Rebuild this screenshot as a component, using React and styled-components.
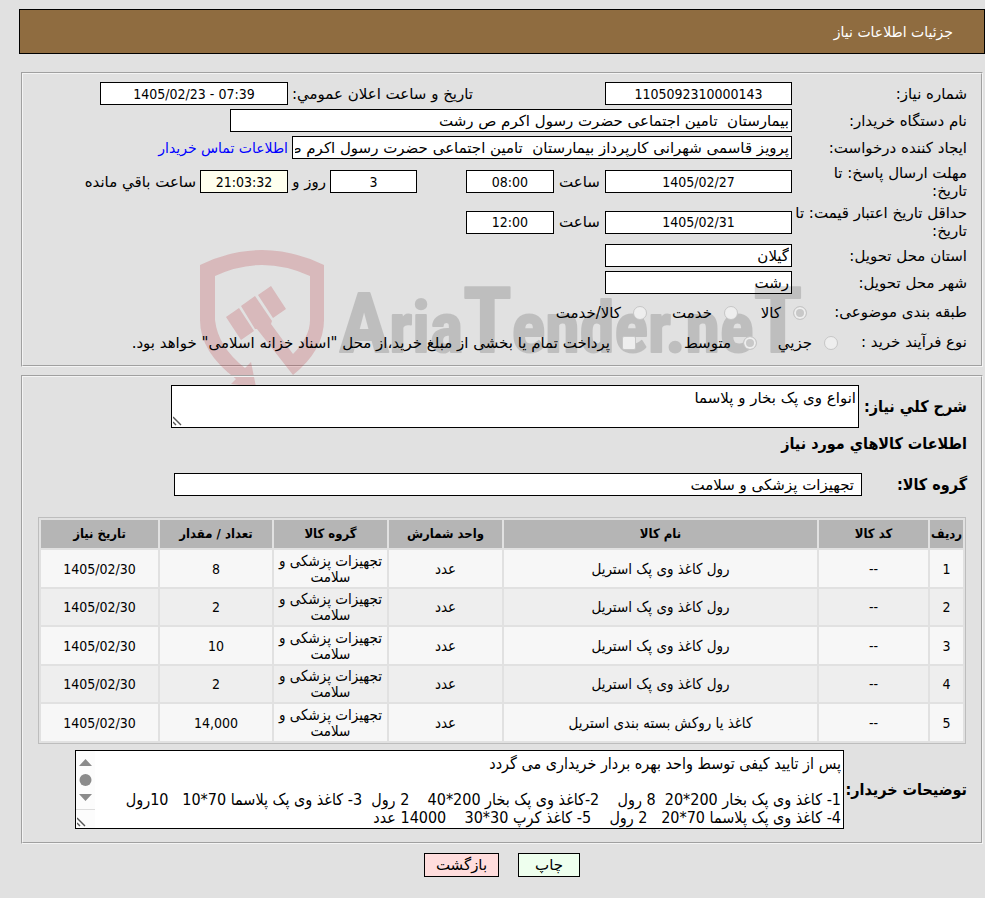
import React from "react";
import styled, { createGlobalStyle } from "styled-components";

const NARROW = '"DejaVu Sans Condensed", "DejaVu Sans", "Noto Sans", sans-serif';

const GlobalStyle = createGlobalStyle`
  * { box-sizing: border-box; }
  body {
    margin: 0;
    background: #e1e1e1;
    color: #000;
    font-family: "DejaVu Sans", "Noto Sans", sans-serif;
    font-size: 15px;
    line-height: 18px;
  }
  input, textarea, button { font: inherit; color: inherit; }
`;

const Page = styled.div`
  direction: rtl;
  padding: 9px 0 22px 19px;
`;

const Banner = styled.header`
  display: flex;
  align-items: center;
  height: 45px;
  padding: 0 31px;
  border: 1px solid #000;
  background: #8f6c40;
  color: #fff;
`;

const Title = styled.h1`
  margin: 0;
  font-size: 14px;
  font-weight: normal;
`;

const Panel = styled.section`
  position: relative;
  margin: ${(p) => p.$top}px 2px 0;
  padding: ${(p) => p.$pad};
  border: 2px groove #f4f4f4;
`;

const Row = styled.div`
  display: flex;
  align-items: center;
  min-height: ${(p) => p.$height || 27}px;
`;

const FieldLabel = styled.label`
  flex: none;
  width: ${(p) => p.$width || 175}px;
  white-space: nowrap;
`;

const RowTitle = styled.span`
  flex: none;
  width: ${(p) => p.$width}px;
  white-space: nowrap;
`;

const Inline = styled.label`
  display: flex;
  flex: none;
  justify-content: ${(p) => p.$justify || "center"};
  width: ${(p) => (p.$width ? p.$width + "px" : "auto")};
  padding: 0 4px;
  white-space: nowrap;
`;

const TextField = styled.input`
  flex: none;
  width: ${(p) => p.$width}px;
  height: 23px;
  margin: 0;
  padding: 0 ${(p) => p.$inset || 2}px;
  border: 1px solid #000;
  border-radius: 0;
  background: ${(p) => p.$bg || "#fff"};
  text-align: start;
`;

const NumberField = styled(TextField)`
  font-family: ${NARROW};
  font-size: 14px;
  text-align: center;
`;

const ContactLink = styled.a`
  padding: 0 4px;
  color: #00f;
  font-size: 14px;
  text-decoration: none;
  white-space: nowrap;
`;

const Choice = styled.label`
  position: relative;
  z-index: 1;
  display: flex;
  align-items: center;
  gap: 12px;
  flex: none;
  width: ${(p) => (p.$width ? p.$width + "px" : "auto")};
  padding-top: 1px;
  white-space: nowrap;
`;

const Mark = styled.input`
  appearance: none;
  flex: none;
  width: 14px;
  height: 14px;
  margin: 0;
  border: 1px solid #c6c6c6;
  border-radius: ${(p) => (p.type === "radio" ? "50%" : "2px")};
  background: #eee;
  &:checked {
    background: #c8c8c8;
    box-shadow: inset 0 0 0 2px #eee;
  }
`;

const Watermark = styled.svg`
  position: absolute;
  top: 176px;
  left: 177px;
  width: 602px;
  height: 140px;
  pointer-events: none;
`;

const Shield = styled.path`
  fill: rgba(180, 25, 35, 0.2);
`;

const Wordmark = styled.text`
  direction: ltr;
  fill: #000;
  stroke: #000;
  stroke-width: 2px;
  stroke-linejoin: round;
  opacity: 0.15;
  font-family: "Liberation Sans Narrow", "Roboto Condensed", Roboto, sans-serif;
  font-weight: bold;
  font-size: 70px;
`;

const Tall = styled.tspan`
  font-size: ${(p) => p.$size}px;
`;

const BoldLabel = styled.label`
  flex: none;
  width: ${(p) => p.$width}px;
  font-family: ${NARROW};
  font-size: 16px;
  font-weight: bold;
  white-space: nowrap;
`;

const SubTitle = styled.h2`
  margin: 0;
  font-family: ${NARROW};
  font-size: 16px;
  line-height: 18px;
  font-weight: bold;
`;

const AreaWrap = styled.div`
  position: relative;
  display: flex;
  flex: none;
  width: ${(p) => p.$width}px;
  height: ${(p) => p.$height}px;
`;

const Area = styled.textarea`
  width: 100%;
  height: 100%;
  margin: 0;
  padding: ${(p) => p.$pad};
  border: 1px solid #000;
  border-radius: 0;
  background: #fff;
  resize: none;
  overflow: hidden;
  line-height: 18px;
`;

const NotesArea = styled(Area)`
  font-family: ${NARROW};
  font-size: 16px;
`;

const Grip = styled.svg`
  position: absolute;
  left: 2px;
  bottom: 2px;
`;

const ScrollTrack = styled.svg`
  position: absolute;
  left: 1px;
  top: 1px;
`;

const Items = styled.table`
  width: calc(100% - 1px);
  margin: 8px 1px 0 0;
  table-layout: fixed;
  border: 1px solid #bdbdbd;
  border-collapse: separate;
  border-spacing: 2px;
  font-family: ${NARROW};
  font-size: 15px;
  line-height: 16px;
  text-align: center;
  th {
    height: 28px;
    padding: 0;
    background: #b5b5b5;
    font-size: 13px;
    white-space: nowrap;
  }
  td {
    height: 36px;
    padding: 0 2px;
    background: #eee;
  }
  tbody tr:nth-child(odd) td {
    height: 37px;
    background: #f7f7f7;
  }
`;

const NumberCell = styled.td`
  font-size: 14px;
`;

const Col = styled.col`
  width: ${(p) => (p.$width ? p.$width + "px" : "auto")};
`;

const Actions = styled.div`
  display: flex;
  justify-content: center;
  gap: 19px;
  margin-top: 9px;
`;

const Button = styled.button`
  width: ${(p) => p.$width}px;
  height: 24px;
  padding: 0;
  border: 1px solid #000;
  background: ${(p) => p.$bg};
`;

const HEADINGS = [
  ["ردیف", 33],
  ["کد کالا", 109],
  ["نام کالا", 0],
  ["واحد شمارش", 113],
  ["گروه کالا", 113],
  ["تعداد / مقدار", 112],
  ["تاریخ نیاز", 117],
];

const ITEMS = [
  ["رول کاغذ وی پک استریل", "8"],
  ["رول کاغذ وی پک استریل", "2"],
  ["رول کاغذ وی پک استریل", "10"],
  ["رول کاغذ وی پک استریل", "2"],
  ["کاغذ یا روکش بسته بندی استریل", "14,000"],
];

const NOTES = [
  "پس از تایید کیفی توسط واحد بهره بردار خریداری می گردد",
  "",
  "1- کاغذ وی پک بخار 200*20  8 رول    2-کاغذ وی پک بخار 200*40    2 رول  3- کاغذ وی پک پلاسما 70*10   10رول",
  "4- کاغذ وی پک پلاسما 70*20   2 رول    5- کاغذ کرپ 30*30    14000 عدد",
].join("\n");

function ResizeGrip() {
  return (
    <Grip width="10" height="10" viewBox="0 0 10 10" aria-hidden="true">
      <path d="M0 1 L8 9 M0 6 L3 9" stroke="#555" strokeWidth="1.4" fill="none" />
    </Grip>
  );
}

function Logo() {
  return (
    <Watermark viewBox="0 0 602 140" aria-hidden="true">
      <Shield d="M0 15 Q62 -15 124 15 V70 Q124 100 93 125 L57 79 L55 79 L41 56 L55 46 L72 71 L71 74 L93 104 Q110 87 110 70 V26 Q62 4 15 26 V70 Q18 97 45 118 L51 112 L56 137 L31 134 L36 129 Q0 102 0 70 Z" />
      <Shield d="M26 67 L39 58 L54 81 L41 90 Z M58 45 L71 36 L86 59 L73 68 Z" />
      <Wordmark x="139" y="102">
        <Tall $size={84}>A</Tall>ria<Tall $size={90}>T</Tall>ender.ne<Tall $size={90}>T</Tall>
      </Wordmark>
    </Watermark>
  );
}

function NeedDetails() {
  return (
    <Panel $top={18} $pad="6px 14px 9px">
      <Row>
        <FieldLabel htmlFor="number">شماره نیاز:</FieldLabel>
        <NumberField id="number" $width={187} dir="ltr" readOnly value="1105092310000143" />
        <Inline htmlFor="announce" $width={317} $justify="flex-end">تاریخ و ساعت اعلان عمومي:</Inline>
        <NumberField id="announce" $width={188} dir="ltr" readOnly value="1405/02/23 - 07:39" />
      </Row>
      <Row>
        <FieldLabel htmlFor="org">نام دستگاه خریدار:</FieldLabel>
        <TextField id="org" $width={562} readOnly value="بیمارستان  تامین اجتماعی حضرت رسول اکرم ص رشت" />
      </Row>
      <Row>
        <FieldLabel htmlFor="creator">ایجاد کننده درخواست:</FieldLabel>
        <TextField id="creator" $width={500} readOnly value="پرویز قاسمی شهرانی کارپرداز بیمارستان  تامین اجتماعی حضرت رسول اکرم ص رشت" />
        <ContactLink href="#contact">اطلاعات تماس خریدار</ContactLink>
      </Row>
      <Row $height={41}>
        <FieldLabel htmlFor="deadline">مهلت ارسال پاسخ: تا<br />تاریخ:</FieldLabel>
        <NumberField id="deadline" $width={187} dir="ltr" readOnly value="1405/02/27" />
        <Inline htmlFor="deadline-time" $width={51}>ساعت</Inline>
        <NumberField id="deadline-time" $width={88} dir="ltr" readOnly value="08:00" />
        <Inline as="span" $width={49} />
        <NumberField id="days" $width={87} dir="ltr" readOnly value="3" />
        <Inline htmlFor="days" $width={42} $justify="flex-start">روز و</Inline>
        <NumberField id="left" $width={88} $bg="#ffffee" dir="ltr" readOnly value="21:03:32" />
        <Inline htmlFor="left">ساعت باقي مانده</Inline>
      </Row>
      <Row $height={40}>
        <FieldLabel htmlFor="valid">حداقل تاریخ اعتبار قیمت: تا<br />تاریخ:</FieldLabel>
        <NumberField id="valid" $width={187} dir="ltr" readOnly value="1405/02/31" />
        <Inline htmlFor="valid-time" $width={51}>ساعت</Inline>
        <NumberField id="valid-time" $width={88} dir="ltr" readOnly value="12:00" />
      </Row>
      <Row>
        <FieldLabel htmlFor="province">استان محل تحویل:</FieldLabel>
        <TextField id="province" $width={187} readOnly value="گیلان" />
      </Row>
      <Row>
        <FieldLabel htmlFor="city">شهر محل تحویل:</FieldLabel>
        <TextField id="city" $width={187} readOnly value="رشت" />
      </Row>
      <Row $height={32}>
        <RowTitle $width={160}>طبقه بندی موضوعی:</RowTitle>
        <Choice $width={69}><Mark type="radio" name="subject" disabled defaultChecked />کالا</Choice>
        <Choice $width={91}><Mark type="radio" name="subject" disabled />خدمت</Choice>
        <Choice><Mark type="radio" name="subject" disabled />کالا/خدمت</Choice>
      </Row>
      <Row $height={28}>
        <RowTitle $width={129}>نوع فرآیند خرید :</RowTitle>
        <Choice $width={81}><Mark type="radio" name="process" disabled />جزیي</Choice>
        <Choice $width={121}><Mark type="radio" name="process" disabled defaultChecked />متوسط</Choice>
        <Choice><Mark type="checkbox" disabled />پرداخت تمام یا بخشی از مبلغ خرید،از محل "اسناد خزانه اسلامی" خواهد بود.</Choice>
      </Row>
      <Logo />
    </Panel>
  );
}

function ItemsTable() {
  return (
    <Items>
      <colgroup>
        {HEADINGS.map(([name, width]) => <Col key={name} $width={width} />)}
      </colgroup>
      <thead>
        <tr>{HEADINGS.map(([name]) => <th key={name} scope="col">{name}</th>)}</tr>
      </thead>
      <tbody>
        {ITEMS.map(([name, count], i) => (
          <tr key={i}>
            <NumberCell>{i + 1}</NumberCell>
            <NumberCell>--</NumberCell>
            <td>{name}</td>
            <td>عدد</td>
            <td>تجهیزات پزشکی و سلامت</td>
            <NumberCell>{count}</NumberCell>
            <NumberCell dir="ltr">1405/02/30</NumberCell>
          </tr>
        ))}
      </tbody>
    </Items>
  );
}

function Goods() {
  return (
    <Panel $top={8} $pad="8px 14px 7px 15px">
      <Row $height={43}>
        <BoldLabel htmlFor="summary" $width={108}>شرح کلي نیاز:</BoldLabel>
        <AreaWrap $width={688} $height={43}>
          <Area id="summary" $pad="3px 2px" readOnly value="انواع وی پک بخار و پلاسما" />
          <ResizeGrip />
        </AreaWrap>
      </Row>
      <Row $height={32}>
        <SubTitle>اطلاعات کالاهاي مورد نیاز</SubTitle>
      </Row>
      <Row $height={49}>
        <BoldLabel htmlFor="group" $width={105}>گروه کالا:</BoldLabel>
        <TextField id="group" $width={688} $inset={7} readOnly value="تجهیزات پزشکی و سلامت" />
      </Row>
      <ItemsTable />
      <Row $height={91}>
        <BoldLabel htmlFor="notes" $width={123}>توضیحات خریدار:</BoldLabel>
        <AreaWrap $width={769} $height={79}>
          <NotesArea id="notes" $pad="4px 2px 0 20px" readOnly value={NOTES} />
          <ScrollTrack width="19" height="77" viewBox="0 0 19 77" aria-hidden="true">
            <path d="M0 0H19V77H0Z" fill="#fcfcfc" />
            <path d="M3 15 L9.5 8 L16 15Z M3 43 L9.5 50 L16 43Z" fill="#8b8b8b" />
            <circle cx="9.5" cy="29" r="6" fill="#8b8b8b" />
            <path d="M0 58.5H19" stroke="#dcdcdc" />
          </ScrollTrack>
          <ResizeGrip />
        </AreaWrap>
      </Row>
    </Panel>
  );
}

export default function App() {
  return (
    <Page>
      <GlobalStyle />
      <Banner><Title>جزئیات اطلاعات نیاز</Title></Banner>
      <main>
        <NeedDetails />
        <Goods />
        <Actions>
          <Button type="button" $width={62} $bg="#eeffee">چاپ</Button>
          <Button type="button" $width={75} $bg="#ffdddd">بازگشت</Button>
        </Actions>
      </main>
    </Page>
  );
}
